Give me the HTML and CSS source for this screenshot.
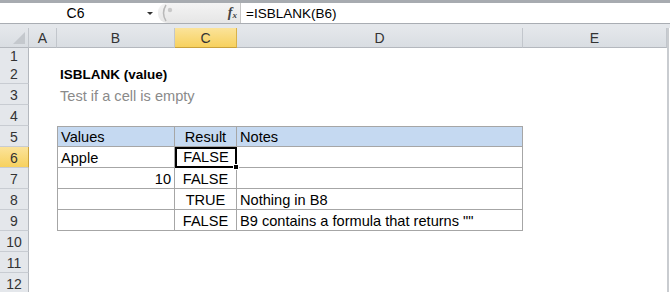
FILE: index.html
```html
<!DOCTYPE html>
<html>
<head>
    <title>ISBLANK function</title>
    <link rel="stylesheet" href="styles.css">
</head>
<body>
    <div class="topband"></div>

    <div class="formulabar">
        <div class="namebox">
            <span class="ref">C6</span>
            <span class="arrow"></span>
        </div>
        <div class="fxzone">
            <svg class="grip" width="14" height="18" viewBox="0 0 14 18">
                <path d="M6 1 Q1 9 6 17" fill="none" stroke="#b9b9b9" stroke-width="1.5"/>
                <circle cx="10" cy="6" r="2.2" fill="#c9c9c9"/>
            </svg>
            <span class="fx">f<sub>x</sub></span>
        </div>
        <div class="formula">=ISBLANK(B6)</div>
    </div>

    <div class="band"></div>

    <div class="sheet">
        <div class="row colheads">
            <div class="corner"><span class="tri"></span></div>
            <div class="colhead">A</div>
            <div class="colhead">B</div>
            <div class="colhead active">C</div>
            <div class="colhead">D</div>
            <div class="colhead">E</div>
            <div class="scroll"></div>
        </div>

        <div class="row short">
            <div class="rowhead">1</div>
            <div></div><div></div><div></div><div></div><div></div>
            <div class="scroll"></div>
        </div>
        <div class="row">
            <div class="rowhead">2</div>
            <div></div>
            <div class="cell title">ISBLANK (value)</div>
            <div></div><div></div><div></div>
            <div class="scroll"></div>
        </div>
        <div class="row">
            <div class="rowhead">3</div>
            <div></div>
            <div class="cell subtitle">Test if a cell is empty</div>
            <div></div><div></div><div></div>
            <div class="scroll"></div>
        </div>
        <div class="row">
            <div class="rowhead">4</div>
            <div></div><div></div><div></div><div></div><div></div>
            <div class="scroll"></div>
        </div>
        <div class="row">
            <div class="rowhead">5</div>
            <div></div>
            <div class="cell bx first top hdr">Values</div>
            <div class="cell bx top hdr center">Result</div>
            <div class="cell bx top hdr">Notes</div>
            <div></div>
            <div class="scroll"></div>
        </div>
        <div class="row">
            <div class="rowhead active">6</div>
            <div></div>
            <div class="cell bx first">Apple</div>
            <div class="cell bx center selected">FALSE<span class="handle"></span></div>
            <div class="cell bx"></div>
            <div></div>
            <div class="scroll"></div>
        </div>
        <div class="row">
            <div class="rowhead">7</div>
            <div></div>
            <div class="cell bx first right">10</div>
            <div class="cell bx center">FALSE</div>
            <div class="cell bx"></div>
            <div></div>
            <div class="scroll"></div>
        </div>
        <div class="row">
            <div class="rowhead">8</div>
            <div></div>
            <div class="cell bx first"></div>
            <div class="cell bx center">TRUE</div>
            <div class="cell bx">Nothing in B8</div>
            <div></div>
            <div class="scroll"></div>
        </div>
        <div class="row">
            <div class="rowhead">9</div>
            <div></div>
            <div class="cell bx first"></div>
            <div class="cell bx center">FALSE</div>
            <div class="cell bx">B9 contains a formula that returns ""</div>
            <div></div>
            <div class="scroll"></div>
        </div>
        <div class="row">
            <div class="rowhead">10</div>
            <div></div><div></div><div></div><div></div><div></div>
            <div class="scroll"></div>
        </div>
        <div class="row">
            <div class="rowhead">11</div>
            <div></div><div></div><div></div><div></div><div></div>
            <div class="scroll"></div>
        </div>
        <div class="row">
            <div class="rowhead">12</div>
            <div></div><div></div><div></div><div></div><div></div>
            <div class="scroll"></div>
        </div>
    </div>
</body>
</html>
```

FILE: styles.css
```css
* { box-sizing: border-box; }
body { margin: 0; width: 670px; height: 292px; overflow: hidden; background: #fff; font-family: "Liberation Sans", Arial, sans-serif; font-size: 14.6px; color: #000; }

.topband { height: 3px; background: #a7abb0; }

.formulabar { display: flex; height: 21px; border-bottom: 1px solid #a9adb3; background: #fff; }
.namebox { width: 158px; display: flex; align-items: center; position: relative; }
.namebox .ref { flex: 1; text-align: center; padding-left: 4px; font-size: 14px; }
.namebox .arrow { width: 0; height: 0; border-left: 3px solid transparent; border-right: 3px solid transparent; border-top: 3px solid #333; margin-right: 5px; }
.fxzone { width: 83px; display: flex; align-items: center; justify-content: space-between; padding: 0 3px 0 2px; background: linear-gradient(#f4f4f4, #e6e6e6); border-radius: 9px 0 0 9px; border-right: 1px solid #c6c6c6; }
.fx { font-family: "Liberation Serif", serif; font-style: italic; font-weight: bold; font-size: 14px; color: #444; }
.fx sub { font-size: 9px; vertical-align: -1px; }
.formula { flex: 1; padding-left: 5px; display: flex; align-items: center; font-size: 13.5px; }

.band { height: 4px; background: #e4e7eb; }

.row { display: grid; grid-template-columns: 29px 28px 118px 62px 286px 144px 3px; height: 21px; }
.row.short { height: 15px; }
.row.colheads { height: 20px; }

.colhead, .corner { background: linear-gradient(#e4e7eb, #d9dde2); border-right: 1px solid #c2c6cc; border-bottom: 1px solid #b4b8be; display: flex; align-items: center; justify-content: center; color: #333; font-size: 14px; }
.colhead.active { background: linear-gradient(#fbe39a, #f7d15e); border-right-color: #d9b24a; border-bottom-color: #c9a13c; }
.corner { position: relative; }
.corner .tri { position: absolute; right: 3px; bottom: 3px; width: 0; height: 0; border-left: 12px solid transparent; border-bottom: 12px solid #c4c8cd; }

.rowhead { background: #e4e7eb; border-right: 1px solid #b4b8be; border-bottom: 1px solid #c8ccd2; display: flex; align-items: flex-end; justify-content: center; padding-bottom: 1px; line-height: 16px; color: #333; font-size: 14px; }
.rowhead.active { background: linear-gradient(#fbe39a, #f7d15e); border-right-color: #c9a13c; }
.row.short .rowhead { align-items: center; padding-bottom: 0; }

.scroll { border-left: 2px solid #c9ccd0; }

.cell { display: flex; align-items: flex-end; padding: 0 3px 1px; line-height: 16px; white-space: nowrap; }
.cell.title { font-weight: bold; font-size: 13.5px; overflow: visible; }
.cell.subtitle { color: #8a8a8a; overflow: visible; }
.cell.center { justify-content: center; }
.cell.right { justify-content: flex-end; }

.bx { border-right: 1px solid #a6a6a6; border-bottom: 1px solid #a6a6a6; }
.bx.first { border-left: 1px solid #a6a6a6; }
.bx.top { border-top: 1px solid #a6a6a6; }
.hdr { background: #c5d9f1; }

.selected { position: relative; border: 2px solid #000; }
.handle { position: absolute; right: -4px; bottom: -4px; width: 6px; height: 6px; background: #000; border: 1px solid #fff; }
```
